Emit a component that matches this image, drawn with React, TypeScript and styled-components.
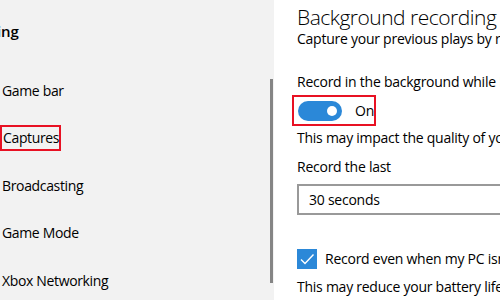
import React from "react";
import styled, { createGlobalStyle } from "styled-components";

const GlobalStyle = createGlobalStyle`
	body {
		margin: 0;
		font-family: "Open Sans", "Noto Sans", sans-serif;
		color: #000;
	}
`;

const navItems = ["Game bar", "Captures", "Broadcasting", "Game Mode", "Xbox Networking"];

export default function App() {
	return (
		<Page>
			<GlobalStyle />
			<Sidebar>
				<SideTitle>Gaming</SideTitle>
				<NavList>
					{navItems.map(item => (
						<NavItem key={item}>
							<NavLabel $marked={item === "Captures"}>{item}</NavLabel>
						</NavItem>
					))}
				</NavList>
				<ScrollThumb />
			</Sidebar>
			<Content>
				<Heading>Background recording</Heading>
				<Text>Capture your previous plays by recording in the background</Text>
				<Text $top={23}>Record in the background while I'm playing a game</Text>
				<ToggleBox>
					<Toggle>
						<Knob />
					</Toggle>
					<span>On</span>
				</ToggleBox>
				<Text $top={2}>This may impact the quality of your game</Text>
				<Text $top={9}>Record the last</Text>
				<Select>30 seconds</Select>
				<CheckRow>
					<CheckBox>
						<svg width="20" height="20" viewBox="0 0 20 20">
							<polyline
								points="4,10.5 8,14.5 16.5,5.5"
								fill="none"
								stroke="#fff"
								strokeWidth="1.4"
							/>
						</svg>
					</CheckBox>
					<span>Record even when my PC isn't plugged in</span>
				</CheckRow>
				<Text $top={8}>This may reduce your battery life</Text>
			</Content>
		</Page>
	);
}

const Page = styled.div`
	display: flex;
	width: 500px;
	height: 300px;
	overflow: hidden;
	font-size: 14px;
	letter-spacing: -0.25px;
	white-space: nowrap;
`;

const Sidebar = styled.div`
	position: relative;
	width: 274px;
	flex-shrink: 0;
	background: #f2f2f2;
	overflow: hidden;
`;

const SideTitle = styled.div`
	margin: 21px 0 0 -37px;
	line-height: 20px;
	font-size: 15px;
	font-weight: 600;
	letter-spacing: 0;
`;

const NavList = styled.div`
	margin-top: 26px;
	display: grid;
	grid-auto-rows: 47.5px;
	align-items: center;
`;

const NavItem = styled.div`
	padding-left: 2px;
	font-size: 14px;
	letter-spacing: -0.35px;
	line-height: 20px;
`;

const NavLabel = styled.span<{ $marked?: boolean }>`
	display: inline-block;
	${({ $marked }) =>
		$marked &&
		`
		border: 2px solid #e81123;
		margin: -3px 0 -3px -2px;
		padding: 1px 0 1px 1px;
	`}
`;

const ScrollThumb = styled.div`
	position: absolute;
	left: 270px;
	top: 79px;
	width: 3px;
	height: 204px;
	background: #858585;
`;

const Content = styled.div`
	flex: 1;
	background: #fff;
	padding-left: 23px;
	overflow: hidden;
`;

const Heading = styled.div`
	margin-top: 5px;
	font-size: 21px;
	font-weight: 300;
	letter-spacing: -0.5px;
	line-height: 24px;
`;

const Text = styled.div<{ $top?: number }>`
	margin-top: ${({ $top }) => $top ?? 0}px;
	line-height: 20px;
`;

const ToggleBox = styled.div`
	margin: 3px 0 0 -5px;
	width: 84px;
	height: 31px;
	box-sizing: border-box;
	border: 2px solid #e81123;
	display: flex;
	align-items: center;
	padding-left: 4px;
	gap: 13px;
`;

const Toggle = styled.div`
	width: 44px;
	height: 20px;
	border-radius: 10px;
	background: #2b88d8;
	position: relative;
`;

const Knob = styled.div`
	position: absolute;
	right: 5px;
	top: 5px;
	width: 10px;
	height: 10px;
	border-radius: 50%;
	background: #fff;
`;

const Select = styled.div`
	margin-top: 7px;
	width: 260px;
	height: 31px;
	box-sizing: border-box;
	border: 2px solid #999;
	padding-left: 10px;
	display: flex;
	align-items: center;
`;

const CheckRow = styled.div`
	margin-top: 34px;
	display: flex;
	align-items: center;
	gap: 8px;
	line-height: 20px;
`;

const CheckBox = styled.div`
	width: 20px;
	height: 20px;
	background: #2b88d8;
	display: flex;
`;
